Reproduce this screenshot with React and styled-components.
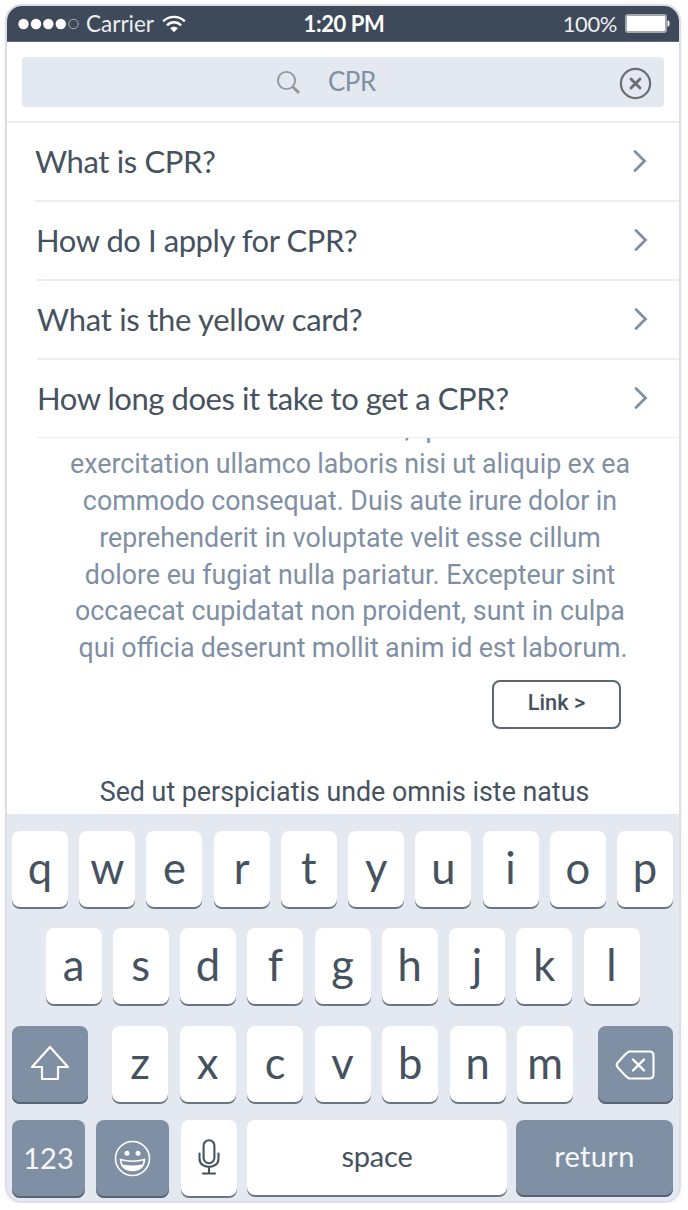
import React from "react";
import styled, { createGlobalStyle } from "styled-components";

const INK = "#465260";
const SLATE = "#8090a4";
const MIST = "#e4e8f1";

const GlobalStyle = createGlobalStyle`
  * { box-sizing: border-box; }
  body { margin: 0; background: #fff; font-family: Lato, "Liberation Sans", sans-serif; color: ${INK}; }
`;

const Phone = styled.main`
  width: 676px;
  height: 1199px;
  margin: 4px 0 0 5px;
  display: flex;
  flex-direction: column;
  overflow: hidden;
  border: 2px solid #dcdee4;
  border-radius: 17px;
  background: #fff;
  box-shadow: 0 2px 4px rgba(70, 70, 70, 0.08);
`;

const StatusBar = styled.header`
  flex: none;
  height: 36px;
  display: grid;
  grid-template-columns: 1fr auto 1fr;
  align-items: center;
  padding: 0 9px 0 11px;
  border-bottom: 1px solid #5f6975;
  background: #3e4959;
  color: #eceef1;
  font-size: 22.5px;
`;

const Carrier = styled.div`
  display: flex;
  align-items: center;
`;

const SignalIcon = styled.svg`
  display: block;
  margin-right: 7px;
`;

const WifiIcon = styled.svg`
  display: block;
  margin-left: 8px;
`;

const Clock = styled.div`
  color: #fff;
  font-weight: 700;
  font-size: 22px;
  letter-spacing: -0.4px;
`;

const Power = styled.div`
  display: flex;
  justify-content: flex-end;
  align-items: center;
  gap: 8px;
  font-size: 22px;
  letter-spacing: -0.4px;
`;

const SearchArea = styled.div`
  flex: none;
  height: 81px;
  padding: 15px 15px 0;
  border-bottom: 2px solid #eaeef3;
`;

const SearchField = styled.div`
  height: 50px;
  display: flex;
  align-items: center;
  padding: 0 12px 0 254px;
  border-radius: 4px;
  background: ${MIST};
`;

const Query = styled.span`
  flex: 1;
  margin: -2px 0 0 27px;
  color: ${SLATE};
  font-size: 26px;
  letter-spacing: -0.5px;
  line-height: 32px;
`;

const ClearIcon = styled.svg`
  margin-top: 2px;
`;

const Results = styled.ul`
  flex: none;
  margin: 0;
  padding: 0;
  list-style: none;
`;

const Result = styled.li`
  height: ${(p) => (p.$last ? 78 : 79)}px;
  margin-left: ${(p) => p.$inset}px;
  display: flex;
  align-items: center;
  justify-content: space-between;
  padding: 0 ${(p) => p.$end}px 2px 0;
  border-bottom: ${(p) => (p.$last ? 1 : 2)}px solid #ebeef4;
  font-size: 31px;
  letter-spacing: ${(p) => p.$track}px;
`;

const Question = styled.span`
  padding-top: 1px;
`;

const Article = styled.section`
  flex: 1;
  min-height: 0;
  overflow: hidden;
  font-family: Roboto, "Liberation Sans", sans-serif;
  font-size: 26.8px;
`;

const Paragraph = styled.p`
  margin: -28.5px 0 0 14px;
  color: ${SLATE};
  line-height: 36.8px;
  text-align: center;
  white-space: nowrap;
`;

const Line = styled.span`
  display: block;
  padding-left: ${(p) => p.$shift || 0}px;
  word-spacing: ${(p) => p.$gap || 0}px;
`;

const LinkButton = styled.button`
  display: block;
  width: 129px;
  height: 49px;
  margin: 13px 0 0 485px;
  padding: 0 0 4px;
  border: 2px solid #5b6775;
  border-radius: 8px;
  background: #fff;
  color: ${INK};
  font: 500 21.8px Roboto, "Liberation Sans", sans-serif;
`;

const NextHeading = styled.p`
  margin: 44px 0 0 3px;
  text-align: center;
  line-height: 38px;
  color: ${INK};
  white-space: nowrap;
`;

const Keyboard = styled.div`
  flex: none;
  height: 387px;
  padding: 17px 6px 0 5px;
  background: ${MIST};
`;

const KeyRow = styled.div`
  display: flex;
  justify-content: ${(p) => (p.$packed ? "flex-start" : "space-between")};
  height: 78px;
  padding: 0 ${(p) => p.$inset || 0}px;
  margin-bottom: ${(p) => p.$after || 0}px;
`;

const LetterGroup = styled.div`
  display: flex;
  justify-content: space-between;
  width: 462px;
  margin-right: 24.4px;
`;

const Key = styled.button`
  flex: none;
  width: ${(p) => p.$width || 56}px;
  height: ${(p) => p.$height || 78}px;
  display: flex;
  align-items: center;
  justify-content: center;
  margin: 0 ${(p) => p.$gap || 0}px 0 0;
  padding: 0 0 ${(p) => p.$lift ?? 6}px;
  border: 0;
  border-radius: 8px;
  background: ${(p) => (p.$dark ? SLATE : "#fff")};
  box-shadow: inset 0 -2px 0 ${(p) => (p.$dark ? "#566475" : "#697582")};
  color: ${(p) => (p.$dark ? "#f5f7fa" : INK)};
  font: 400 ${(p) => p.$size || 43.5}px Lato, "Liberation Sans", sans-serif;
  letter-spacing: ${(p) => p.$track || 0}px;
`;

const questions = [
  { text: "What is CPR?", inset: 28, end: 32, track: -0.36 },
  { text: "How do I apply for CPR?", inset: 29, end: 31, track: -0.44 },
  { text: "What is the yellow card?", inset: 30, end: 31, track: -0.27 },
  { text: "How long does it take to get a CPR?", inset: 30, end: 31, track: -0.44 },
];

const paragraph = [
  { text: "enim ad minim veniam, quis nostrud" },
  { text: "exercitation ullamco laboris nisi ut aliquip ex ea", gap: -0.4 },
  { text: "commodo consequat. Duis aute irure dolor in", gap: -0.2 },
  { text: "reprehenderit in voluptate velit esse cillum", gap: 0.2 },
  { text: "dolore eu fugiat nulla pariatur. Excepteur sint" },
  { text: "occaecat cupidatat non proident, sunt in culpa", gap: 0.2 },
  { text: "qui officia deserunt mollit anim id est laborum.", gap: -0.4, shift: 6 },
];

const Chevron = () => (
  <svg width="14" height="24" viewBox="0 0 14 24" fill="none" stroke={SLATE} strokeWidth="2.8" strokeLinecap="round" strokeLinejoin="miter">
    <path d="M2 2.5 11.5 12 2 21.5" />
  </svg>
);

const letters = (s) => s.split("").map((c) => <Key key={c}>{c}</Key>);

export default function App() {
  return (
    <>
      <GlobalStyle />
      <Phone>
        <StatusBar>
          <Carrier>
            <SignalIcon width="61" height="12" viewBox="0 0 61 12">
              {[5.5, 18, 30.3, 42.8].map((x) => (
                <circle key={x} cx={x} cy="6" r="5.2" fill="#fff" />
              ))}
              <circle cx="55.5" cy="6" r="4.7" fill="none" stroke="#aab0b8" strokeWidth="1" />
            </SignalIcon>
            Carrier
            <WifiIcon width="24" height="18" viewBox="0 0 24 18" fill="none" stroke="#fff" strokeWidth="2.4">
              <path d="M1.2 6.4C7.2.4 16.8.4 22.8 6.4" />
              <path d="M4.9 10.3C9 6.3 15 6.3 19.1 10.3" />
              <path d="M12 17.3 8.2 13.3C10.4 11.3 13.6 11.3 15.8 13.3Z" fill="#fff" stroke="none" />
            </WifiIcon>
          </Carrier>
          <Clock>1:20 PM</Clock>
          <Power>
            100%
            <svg width="45" height="19" viewBox="0 0 45 19">
              <rect x="1" y="1" width="40" height="17" rx="2" fill="#fff" stroke="#a3a8af" strokeWidth="2" />
              <path d="M42.5 6.5h.6c1 0 1.4.8 1.4 3s-.4 3-1.4 3h-.6z" fill="#fff" />
            </svg>
          </Power>
        </StatusBar>

        <SearchArea>
          <SearchField>
            <svg width="25" height="25" viewBox="0 0 25 25" fill="none" stroke="#969799">
              <circle cx="10.5" cy="10.5" r="8.6" strokeWidth="1.9" />
              <path d="M16.7 16.7 23 23" strokeWidth="3" />
            </svg>
            <Query>CPR</Query>
            <ClearIcon width="33" height="33" viewBox="0 0 33 33" fill="none" stroke="#6d6e71">
              <circle cx="16.5" cy="16.5" r="14.6" strokeWidth="2.2" />
              <path d="m12 12 9 9m0-9-9 9" strokeWidth="2.9" strokeLinecap="round" />
            </ClearIcon>
          </SearchField>
        </SearchArea>

        <Results>
          {questions.map((q, i) => (
            <Result key={q.text} $inset={q.inset} $end={q.end} $track={q.track} $last={i === 3}>
              <Question>{q.text}</Question>
              <Chevron />
            </Result>
          ))}
        </Results>

        <Article>
          <Paragraph>
            {paragraph.map((line) => (
              <Line key={line.text} $gap={line.gap} $shift={line.shift}>
                {line.text}
              </Line>
            ))}
          </Paragraph>
          <LinkButton>Link &gt;</LinkButton>
          <NextHeading>Sed ut perspiciatis unde omnis iste natus</NextHeading>
        </Article>

        <Keyboard>
          <KeyRow $after={19}>{letters("qwertyuiop")}</KeyRow>
          <KeyRow $inset={33.5} $after={20}>{letters("asdfghjkl")}</KeyRow>
          <KeyRow $packed $after={16}>
            <Key $dark $width={76} $gap={24} $lift={4} aria-label="Shift">
              <svg width="40" height="36" viewBox="0 0 40 36" fill="none" stroke="#fff" strokeWidth="2.2" strokeLinejoin="round">
                <path d="M20 2 38 22H28V34H12V22H2Z" />
              </svg>
            </Key>
            <LetterGroup>{letters("zxcvbnm")}</LetterGroup>
            <Key $dark $width={75.5} $lift={1} aria-label="Delete">
              <svg width="40" height="30" viewBox="0 0 40 30" fill="none" stroke="#fff" strokeWidth="2.1" strokeLinejoin="round" strokeLinecap="round">
                <path d="M14 1.5H34.5Q38.5 1.5 38.5 5.5V24.5Q38.5 28.5 34.5 28.5H14Q11.5 27.5 2.5 17Q1 15 2.5 13Q11.5 2.5 14 1.5Z" />
                <path d="m18 9.5 11 11m0-11-11 11" strokeWidth="2.4" />
              </svg>
            </Key>
          </KeyRow>
          <KeyRow $packed>
            <Key $dark $width={73} $gap={10.7} $lift={3} $size={29}>123</Key>
            <Key $dark $width={73} $gap={12.3} $lift={1} aria-label="Emoji">
              <svg width="37" height="37" viewBox="0 0 37 37" fill="none" stroke="#fff" strokeWidth="1.6">
                <circle cx="18.5" cy="18.5" r="17" />
                <circle cx="13" cy="13.3" r="2.5" fill="#fff" stroke="none" />
                <circle cx="24" cy="13.3" r="2.5" fill="#fff" stroke="none" />
                <path d="M6.5 19.5Q18.5 23 30.5 19.5Q29.5 30.5 18.5 30.5T6.5 19.5Z" />
                <path d="M8.5 24.5Q18.5 26.5 28.5 24.5Q25 30.5 18.5 30.5T8.5 24.5Z" fill="#fff" stroke="none" />
              </svg>
            </Key>
            <Key $gap={10} $lift={5} aria-label="Dictate">
              <svg width="24" height="36" viewBox="0 0 24 36" fill="none" stroke={INK} strokeWidth="2.1" strokeLinecap="round">
                <rect x="6.6" y="1.2" width="10.8" height="23" rx="5.4" />
                <path d="M2.5 14.5v5.2c0 5 4 8.2 9.5 8.2s9.5-3.2 9.5-8.2v-5.2M12 28v6M6 34.5h12" />
              </svg>
            </Key>
            <Key $width={260} $height={77} $gap={9} $size={29} $track={-0.2}>space</Key>
            <Key $dark $width={157} $height={77} $size={29} $track={0.3}>return</Key>
          </KeyRow>
        </Keyboard>
      </Phone>
    </>
  );
}
